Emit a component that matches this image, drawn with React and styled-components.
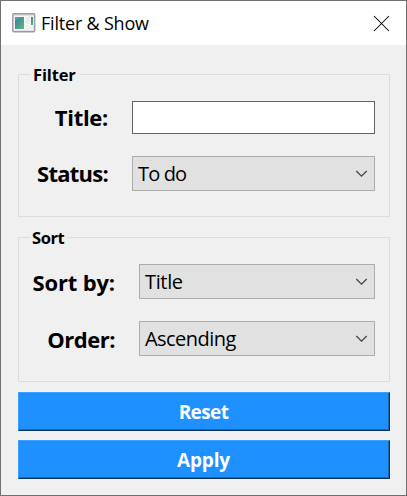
import React from "react";
import styled, { createGlobalStyle } from "styled-components";

const Global = createGlobalStyle`
  * { box-sizing: border-box; }
  body { margin: 0; background: #f0f0f0; overflow: hidden; }
`;

const Window = styled.main`
  width: 407px;
  height: 496px;
  display: flex;
  flex-direction: column;
  background: #f0f0f0;
  border: 1px solid #707070;
  color: #000;
  font-family: "Open Sans", "Noto Sans", sans-serif;
`;

const TitleBar = styled.header`
  height: 44px;
  flex: none;
  display: flex;
  align-items: center;
  padding: 0 16px 0 11px;
  background: #fff;
`;

const WindowTitle = styled.h1`
  flex: 1;
  margin: 0 0 1px 5px;
  font-size: 18px;
  line-height: 24px;
  font-weight: 385;
  letter-spacing: -0.2px;
`;

const CloseButton = styled.button`
  display: flex;
  padding: 0;
  border: 0;
  background: none;
`;

const Body = styled.div`
  display: flex;
  flex-direction: column;
  padding: 29px 16px 0 17px;
`;

const Group = styled.section`
  height: ${(p) => p.$height}px;
  margin-bottom: ${(p) => p.$gap}px;
  border: 1px solid #dcdcdc;
`;

const GroupTitle = styled.h2`
  width: max-content;
  height: 22px;
  margin: -12px 0 0 11px;
  padding: 0 ${(p) => p.$padRight}px 0 ${(p) => p.$padLeft}px;
  background: #f0f0f0;
  font-size: 16.5px;
  line-height: 23px;
  font-weight: 700;
  letter-spacing: ${(p) => p.$tracking}px;
`;

const Fields = styled.div`
  display: grid;
  grid-template-columns: ${(p) => p.$labelWidth}px 1fr;
  column-gap: 24px;
  row-gap: 22px;
  padding: ${(p) => p.$top}px 14px 0 0;
`;

const Label = styled.label`
  align-self: center;
  padding-bottom: ${(p) => p.$lift || 0}px;
  text-align: right;
  white-space: nowrap;
  font-size: 22px;
  line-height: 30px;
  font-weight: 700;
  letter-spacing: ${(p) => p.$tracking}px;
`;

const TextInput = styled.input`
  width: 100%;
  height: 33px;
  border: 1px solid #646464;
  border-radius: 0;
  background: #fff;
  outline: 0;
`;

const Select = styled.button`
  width: 100%;
  height: 35px;
  display: flex;
  align-items: center;
  justify-content: space-between;
  padding: 1px 6px 0 5px;
  border: 1px solid #adadad;
  background: #e1e1e1;
  color: #000;
  font-family: inherit;
  font-size: 20px;
  line-height: 28px;
  font-weight: 375;
  letter-spacing: ${(p) => p.$tracking}px;
`;

const Actions = styled.div`
  display: flex;
  flex-direction: column;
  gap: 9px;
`;

const ActionButton = styled.button`
  height: 39px;
  padding: 1px 1px 0 0;
  border: 1px solid;
  border-color: #3c9eff #0b3560 #0b3560 #3c9eff;
  box-shadow: inset -1px -1px 0 #1767b8;
  background: #1e90ff;
  color: #fff;
  font-family: inherit;
  font-size: 19px;
  line-height: 26px;
  font-weight: 700;
  letter-spacing: ${(p) => p.$tracking}px;
`;

const AppIcon = () => (
  <svg width="24" height="20" viewBox="0 0 24 20">
    <defs>
      <linearGradient id="pane" x1="0" y1="0" x2="1" y2="1">
        <stop offset="0" stopColor="#397fa0" />
        <stop offset="1" stopColor="#5cb979" />
      </linearGradient>
    </defs>
    <rect x="0.75" y="0.75" width="22" height="18" rx="1" fill="#dfe2e5" stroke="#969ca3" strokeWidth="1.3" />
    <rect x="2.5" y="3" width="18.5" height="14" fill="#f7f7f7" />
    <rect x="3" y="4" width="9" height="12" fill="url(#pane)" />
    <path d="M3 8L9 4H3z" fill="#fff" opacity="0.15" />
    <rect x="14" y="4" width="4" height="7" fill="#e9ecec" />
    <rect x="19" y="4" width="2" height="8" fill="url(#pane)" />
    <path d="M14 13.5h7M14 15.5h7" stroke="#ececec" />
  </svg>
);

const CloseIcon = () => (
  <svg width="17" height="17" viewBox="0 0 17 17" fill="none" stroke="#000" strokeWidth="1.05">
    <path d="M1 1L16 16M16 1L1 16" />
  </svg>
);

const Chevron = () => (
  <svg width="13" height="8" viewBox="0 0 13 8" fill="none" stroke="#444" strokeWidth="1.3">
    <path d="M1.3 1L6.5 6.2L11.7 1" />
  </svg>
);

export default function App() {
  return (
    <>
      <Global />
      <Window>
        <TitleBar>
          <AppIcon />
          <WindowTitle>Filter &amp; Show</WindowTitle>
          <CloseButton aria-label="Close"><CloseIcon /></CloseButton>
        </TitleBar>
        <Body>
          <Group $height={143} $gap={20}>
            <GroupTitle $padLeft={3} $padRight={4} $tracking={-0.15}>Filter</GroupTitle>
            <Fields $labelWidth={89} $top={16}>
              <Label $tracking={-0.3} $lift={2}>Title:</Label>
              <TextInput aria-label="Title" />
              <Label $tracking={-0.75} $lift={1}>Status:</Label>
              <Select $tracking={-0.85}>To do<Chevron /></Select>
            </Fields>
          </Group>
          <Group $height={145} $gap={10}>
            <GroupTitle $padLeft={2} $padRight={3} $tracking={-0.4}>Sort</GroupTitle>
            <Fields $labelWidth={96} $top={16}>
              <Label $tracking={-0.15}>Sort by:</Label>
              <Select $tracking={-0.35}>Title<Chevron /></Select>
              <Label $tracking={-0.5}>Order:</Label>
              <Select $tracking={-0.55}>Ascending<Chevron /></Select>
            </Fields>
          </Group>
          <Actions>
            <ActionButton $tracking={-0.6}>Reset</ActionButton>
            <ActionButton $tracking={-0.2}>Apply</ActionButton>
          </Actions>
        </Body>
      </Window>
    </>
  );
}
